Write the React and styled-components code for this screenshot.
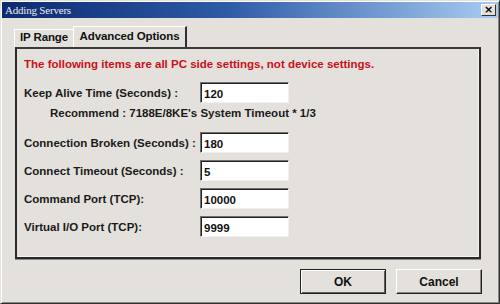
import styled, { createGlobalStyle } from "styled-components";

const Global = createGlobalStyle`
  html, body {
    margin: 0;
    padding: 0;
    background: #e4e1dc;
  }
`;

const rows = [
  { label: "Keep Alive Time (Seconds) :", value: "120" },
  { label: "Connection Broken (Seconds) :", value: "180" },
  { label: "Connect Timeout (Seconds) :", value: "5" },
  { label: "Command Port (TCP):", value: "10000" },
  { label: "Virtual I/O Port (TCP):", value: "9999" },
];

export default function App() {
  return (
    <Window>
      <Global />
      <TitleBar>
        <span>Adding Servers</span>
        <CloseButton>×</CloseButton>
      </TitleBar>
      <Body>
        <Tabs>
          <Tab>IP Range</Tab>
          <Tab active>Advanced Options</Tab>
        </Tabs>
        <Panel>
          <Warning>
            The following items are all PC side settings, not device settings.
          </Warning>
          {rows.map((r, i) => (
            <div key={r.label}>
              <Row first={i === 0}>
                <Label>{r.label}</Label>
                <Field defaultValue={r.value} />
              </Row>
              {i === 0 && (
                <Note>Recommend : 7188E/8KE's System Timeout * 1/3</Note>
              )}
            </div>
          ))}
        </Panel>
        <Buttons>
          <Button primary>OK</Button>
          <Button>Cancel</Button>
        </Buttons>
      </Body>
    </Window>
  );
}

const Window = styled.div`
  width: 500px;
  height: 304px;
  box-sizing: border-box;
  background: #e4e1dc;
  border: 1px solid #e4e1dc;
  border-right-color: #303030;
  border-bottom-color: #303030;
  box-shadow: inset 1px 1px 0 #ffffff, inset -1px -1px 0 #8a8884;
  padding: 1px;
  display: flex;
  flex-direction: column;
  font-family: "Liberation Sans", Arial, sans-serif;
`;

const TitleBar = styled.div`
  height: 16px;
  display: flex;
  align-items: center;
  justify-content: space-between;
  padding: 0 2px 0 3px;
  background: linear-gradient(to right, #0c2a72 0%, #2e5aa6 45%, #a8ccf2 100%);
  color: #ececec;
  font-family: "Liberation Serif", "Times New Roman", serif;
  font-size: 11px;
  letter-spacing: -0.2px;
`;

const CloseButton = styled.div`
  width: 15px;
  height: 12px;
  box-sizing: border-box;
  background: #e4e1dc;
  border: 1px solid #ffffff;
  border-right-color: #303030;
  border-bottom-color: #303030;
  color: #000;
  font-family: "DejaVu Sans", sans-serif;
  font-weight: bold;
  font-size: 11px;
  line-height: 9px;
  text-align: center;
`;

const Body = styled.div`
  flex: 1;
  padding: 8px 16px 0 11px;
  display: flex;
  flex-direction: column;
`;

const Tabs = styled.div`
  display: flex;
  align-items: flex-end;
  height: 21px;
  padding-left: 1px;
`;

const Tab = styled.div`
  height: ${(p) => (p.active ? "21px" : "18px")};
  width: ${(p) => (p.active ? "114px" : "59px")};
  box-sizing: border-box;
  padding-top: ${(p) => (p.active ? "3px" : "1px")};
  border: 1px solid #ffffff;
  border-bottom: none;
  border-right: ${(p) => (p.active ? "2px solid #303030" : "none")};
  font-weight: bold;
  font-size: 11.5px;
  letter-spacing: -0.1px;
  text-align: center;
  color: #111;
  position: relative;
  z-index: ${(p) => (p.active ? 2 : 1)};
  background: #e4e1dc;
`;

const Panel = styled.div`
  height: 212px;
  width: 466px;
  margin-left: 2px;
  box-sizing: border-box;
  border: 2px solid #2a2a2a;
  border-top-color: #3a3a3a;
  box-shadow: inset -1px -1px 0 #f4f4f4, 0 1px 0 #8a8884;
  padding: 8px 0 0 7px;
  display: flex;
  flex-direction: column;
`;

const Warning = styled.div`
  color: #c8101a;
  font-weight: bold;
  font-size: 11.5px;
  line-height: 14px;
  margin-bottom: 11px;
`;

const Row = styled.div`
  display: flex;
  align-items: center;
  margin-top: ${(p) => (p.first ? "0" : "7px")};
`;

const Label = styled.div`
  width: 176px;
  font-weight: bold;
  font-size: 11.5px;
  color: #1a1a1a;
`;

const Field = styled.input`
  width: 89px;
  height: 21px;
  box-sizing: border-box;
  border: 1px solid #f0f0f0;
  border-top-color: #707070;
  border-left-color: #707070;
  box-shadow: inset 1px 1px 0 #202020;
  background: #ffffff;
  padding: 2px 0 0 3px;
  font-family: "Liberation Sans", Arial, sans-serif;
  font-weight: bold;
  font-size: 11.5px;
  color: #111;
  outline: none;
`;

const Note = styled.div`
  margin: 3px 0 5px 26px;
  font-weight: bold;
  font-size: 11.5px;
  line-height: 14px;
  color: #1a1a1a;
`;

const Buttons = styled.div`
  display: flex;
  justify-content: flex-end;
  gap: 10px;
  margin-top: 10px;
`;

const Button = styled.button`
  width: 86px;
  height: 25px;
  box-sizing: border-box;
  background: #e4e1dc;
  border: 1px solid ${(p) => (p.primary ? "#202020" : "#ffffff")};
  border-right-color: #202020;
  border-bottom-color: #202020;
  box-shadow: ${(p) =>
    p.primary
      ? "inset 1px 1px 0 #ffffff, inset -1px -1px 0 #606060"
      : "inset -1px -1px 0 #8a8884"};
  font-family: "Liberation Sans", Arial, sans-serif;
  font-weight: bold;
  font-size: 12px;
  color: #111;
  padding: 0;
`;
